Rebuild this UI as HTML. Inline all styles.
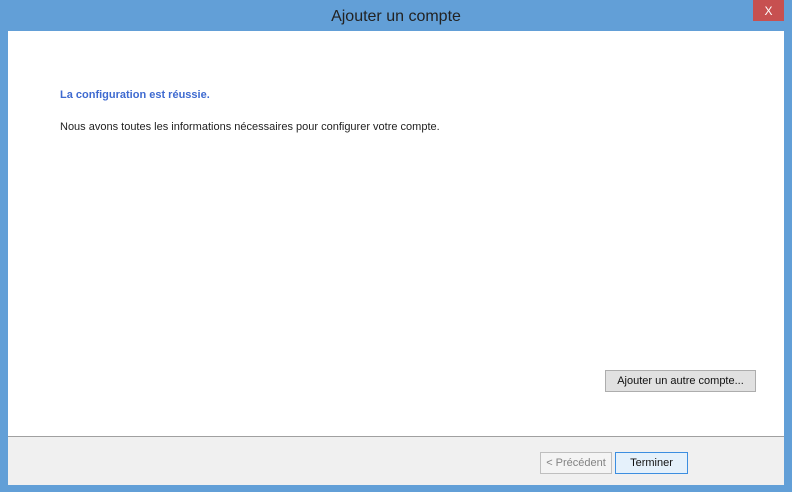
<!DOCTYPE html>
<html><head><style>
body{margin:0;width:792px;height:492px;background:#629fd7;font-family:"Liberation Sans",sans-serif;position:relative;overflow:hidden}
.title{position:absolute;top:8px;left:0;width:792px;text-align:center;font-size:16px;color:#222}
.close{position:absolute;left:753px;top:0;width:31px;height:21px;background:#c75050;color:#fff;font-size:12px;text-align:center;line-height:22px}
.client{position:absolute;left:8px;top:31px;width:776px;height:453px;background:#fff}
.footer{position:absolute;left:0;top:405px;width:776px;height:48px;background:#f0f0f0;border-top:1px solid #a0a0a0}
.h{position:absolute;left:52px;top:58px;font-size:11px;font-weight:bold;color:#3e6ad0}
.p{position:absolute;left:52px;top:90px;font-size:11px;color:#222}
.btn{position:absolute;box-sizing:border-box;border:1px solid #adadad;background:#e1e1e1;font-size:11px;color:#111;text-align:center;line-height:21px}
</style></head><body>
<div class="title">Ajouter un compte</div>
<div class="close">X</div>
<div class="client">
<div class="h">La configuration est réussie.</div>
<div class="p">Nous avons toutes les informations nécessaires pour configurer votre compte.</div>
<div class="btn" style="left:597px;top:339px;width:151px;height:22px">Ajouter un autre compte...</div>
<div class="footer">
<div class="btn" style="left:532px;top:15px;width:72px;height:22px;background:#f4f4f4;border-color:#bfbfbf;color:#838383">&lt; Précédent</div>
<div class="btn" style="left:607px;top:15px;width:73px;height:22px;background:#e5f1fb;border-color:#3c8ee0">Terminer</div>
</div>
</div>
</body></html>
